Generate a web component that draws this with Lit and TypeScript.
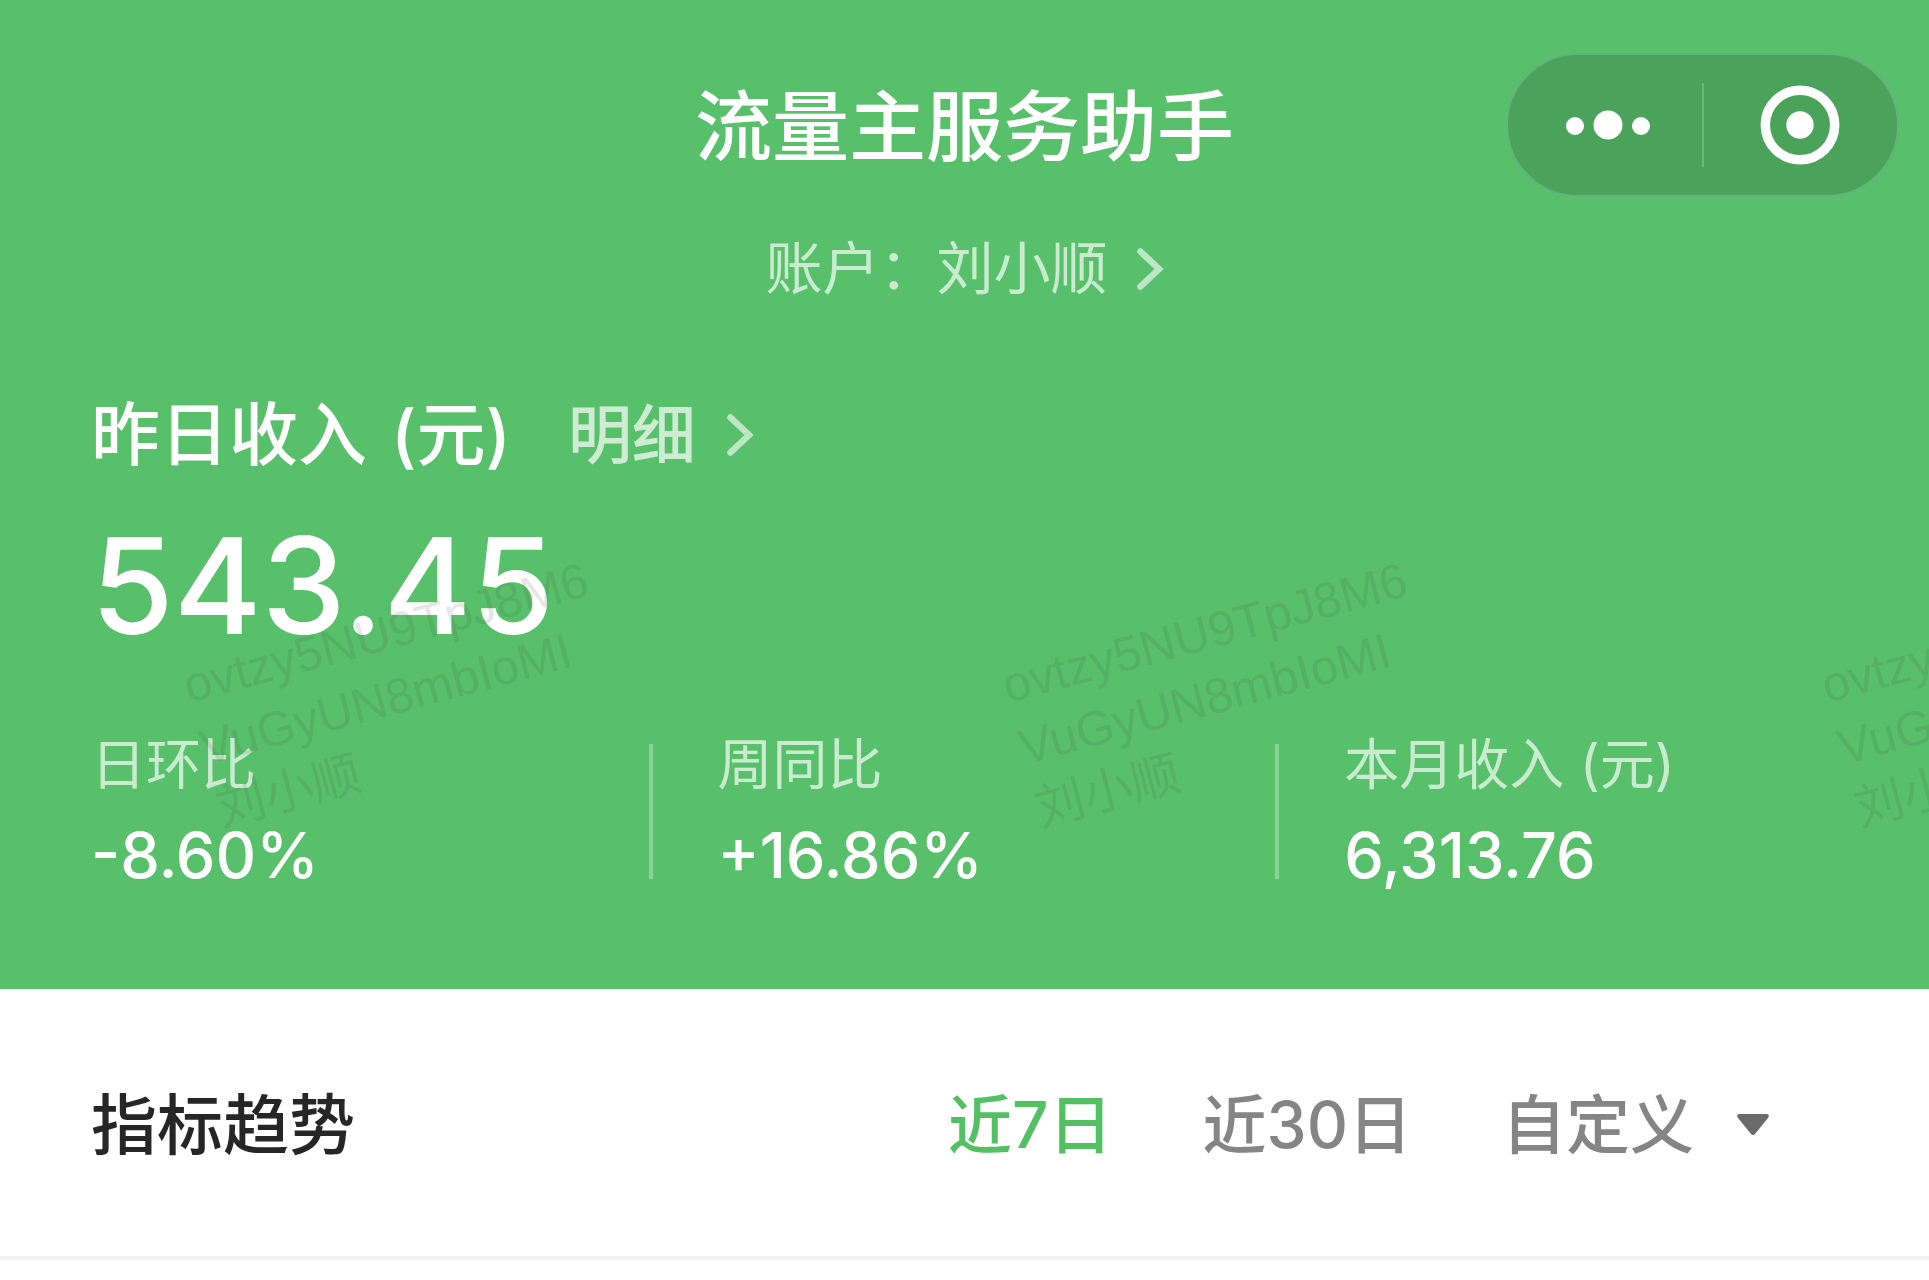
import { LitElement, html, css } from "lit";
import { customElement, state } from "lit/decorators.js";

interface Stat {
  label: string;
  value: string;
}

const STATS: Stat[] = [
  { label: "日环比", value: "-8.60%" },
  { label: "周同比", value: "+16.86%" },
  { label: "本月收入 (元)", value: "6,313.76" },
];

const RANGES = ["近7日", "近30日", "自定义"];

const MARK_LINES = ["ovtzy5NU9TpJ8M6", "VuGyUN8mbIoMI", "刘小顺"];

const chevron = html`
  <svg class="chevron" viewBox="0 0 28 44" aria-hidden="true">
    <path d="M4.500 4.500 L23 22 L4.500 39.500" />
  </svg>
`;

@customElement("app-root")
export class AppRoot extends LitElement {
  @state() private range = RANGES[0];

  static styles = css`
    :host {
      display: block;
      min-height: 100vh;
      background: #fff;
      font-family: Inter, "Noto Sans CJK SC", sans-serif;
      color: #262626;
    }
    h1,
    h2,
    p,
    dl,
    dd {
      margin: 0;
    }
    button {
      margin: 0;
      padding: 0;
      border: 0;
      background: none;
      font: inherit;
      color: inherit;
      cursor: pointer;
    }
    .hero {
      position: relative;
      overflow: hidden;
      padding: 53px 0 102px;
      background: #58c06b;
      color: #fff;
    }
    .bar {
      display: grid;
      grid-template-columns: 1fr auto 1fr;
      align-items: center;
      padding: 0 30px;
    }
    .title {
      grid-column: 2;
      padding-top: 4px;
      font-size: 77px;
      line-height: 96px;
      font-weight: 500;
      white-space: nowrap;
    }
    .capsule {
      justify-self: end;
      box-sizing: border-box;
      display: flex;
      align-items: center;
      width: 393px;
      height: 144px;
      border: 2px solid #62b47d;
      border-radius: 72px;
      background: #4ba25b;
    }
    .capsule-button {
      flex: 1;
      display: flex;
      justify-content: center;
    }
    .capsule-rule {
      width: 2px;
      height: 84px;
      background: #6bb77e;
    }
    .dots {
      width: 86px;
      height: 32px;
      fill: #fff;
      padding-left: 6px;
    }
    .target {
      width: 80px;
      height: 80px;
      fill: #fff;
    }
    .ring {
      fill: none;
      stroke: #fff;
      stroke-width: 9.500;
    }
    .account {
      display: flex;
      align-items: center;
      gap: 28px;
      margin: 40px auto 0;
      font-size: 57px;
      line-height: 64px;
      font-weight: 400;
      color: rgba(255, 255, 255, 0.68);
    }
    .chevron {
      width: 28px;
      height: 44px;
      fill: none;
      stroke: rgba(255, 255, 255, 0.6);
      stroke-width: 6.500;
      stroke-linecap: round;
      stroke-linejoin: miter;
    }
    .summary {
      padding-left: 91px;
    }
    .income-row {
      display: flex;
      align-items: center;
      gap: 57px;
      margin-top: 94px;
      line-height: 80px;
    }
    .income-title {
      display: flex;
      gap: 24px;
      font-size: 69px;
      font-weight: 500;
      line-height: 80px;
    }
    .detail {
      display: flex;
      align-items: center;
      gap: 30px;
      font-size: 64px;
      font-weight: 500;
      color: rgba(255, 255, 255, 0.7);
      text-decoration: none;
    }
    .amount {
      margin-top: 42px;
      font-size: 134px;
      line-height: 136px;
      font-weight: 500;
    }
    .stats {
      display: grid;
      grid-template-columns: 15fr 15fr 14fr;
      margin-top: 83px;
    }
    .stat {
      display: flex;
      align-items: center;
      justify-content: space-between;
      padding-right: 65px;
    }
    .stat:not(:last-child)::after {
      content: "";
      width: 4px;
      height: 135px;
      background: rgba(255, 255, 255, 0.3);
    }
    .stat-body {
      display: grid;
      gap: 31px;
    }
    .stat-label {
      font-size: 55px;
      line-height: 56px;
      font-weight: 400;
      color: rgba(255, 255, 255, 0.68);
    }
    .stat-value {
      font-size: 63px;
      line-height: 64px;
      font-weight: 500;
    }
    .marks {
      position: absolute;
      top: 649px;
      left: 226px;
      display: flex;
      pointer-events: none;
    }
    .mark {
      flex: none;
      width: 819px;
      font-family: "Liberation Sans", "Noto Sans CJK SC", sans-serif;
      font-size: 49px;
      line-height: 64px;
      font-weight: 400;
      color: rgba(70, 70, 70, 0.13);
      transform: rotate(-15deg);
      transform-origin: 0 100%;
    }
    .trend {
      display: flex;
      align-items: center;
      justify-content: space-between;
      padding: 96px 160px 91px 91px;
      border-bottom: 4px solid #f2f2f2;
    }
    .trend-title {
      font-size: 66px;
      line-height: 80px;
      font-weight: 500;
    }
    .ranges {
      display: flex;
      gap: 90px;
    }
    .range {
      display: flex;
      align-items: center;
      gap: 43px;
      font-size: 64px;
      line-height: 80px;
      font-weight: 500;
      color: #858585;
    }
    .range[aria-pressed="true"] {
      color: #54c064;
    }
    .caret {
      width: 32px;
      height: 22px;
      fill: #6b6b6b;
    }
  `;

  render() {
    return html`
      <header class="hero">
        <div class="bar">
          <h1 class="title">流量主服务助手</h1>
          <div class="capsule">
            <button class="capsule-button" aria-label="更多">
              <svg class="dots" viewBox="0 0 86 32">
                <circle cx="10" cy="17" r="9" />
                <circle cx="43" cy="16" r="14.500" />
                <circle cx="76" cy="17" r="9" />
              </svg>
            </button>
            <span class="capsule-rule"></span>
            <button class="capsule-button" aria-label="关闭">
              <svg class="target" viewBox="0 0 80 80">
                <circle class="ring" cx="40" cy="40" r="34.700" />
                <circle cx="40" cy="40" r="13.700" />
              </svg>
            </button>
          </div>
        </div>
        <button class="account"><span>账户：刘小顺</span>${chevron}</button>
        <section class="summary">
          <div class="income-row">
            <h2 class="income-title"><span>昨日收入</span> <span>(元)</span></h2>
            <a class="detail" href="#detail">明细${chevron}</a>
          </div>
          <p class="amount">543.45</p>
          <div class="stats">
            ${STATS.map(
              (s) => html`
                <div class="stat">
                  <dl class="stat-body">
                    <dt class="stat-label">${s.label}</dt>
                    <dd class="stat-value">${s.value}</dd>
                  </dl>
                </div>
              `
            )}
          </div>
        </section>
        <div class="marks" aria-hidden="true">
          ${[0, 1, 2].map(
            () => html`
              <div class="mark">${MARK_LINES.map((l) => html`<div>${l}</div>`)}</div>
            `
          )}
        </div>
      </header>
      <section class="trend">
        <h2 class="trend-title">指标趋势</h2>
        <div class="ranges">
          ${RANGES.map(
            (r) => html`
              <button
                class="range"
                aria-pressed=${r === this.range ? "true" : "false"}
                @click=${() => (this.range = r)}
              >
                ${r}${r === "自定义"
                  ? html`<svg class="caret" viewBox="0 0 32 22" aria-hidden="true">
                      <path d="M2 0H30Q33 1 31 4L18 20Q16 22 14 20L1 4Q-1 1 2 0Z" />
                    </svg>`
                  : ""}
              </button>
            `
          )}
        </div>
      </section>
    `;
  }
}
